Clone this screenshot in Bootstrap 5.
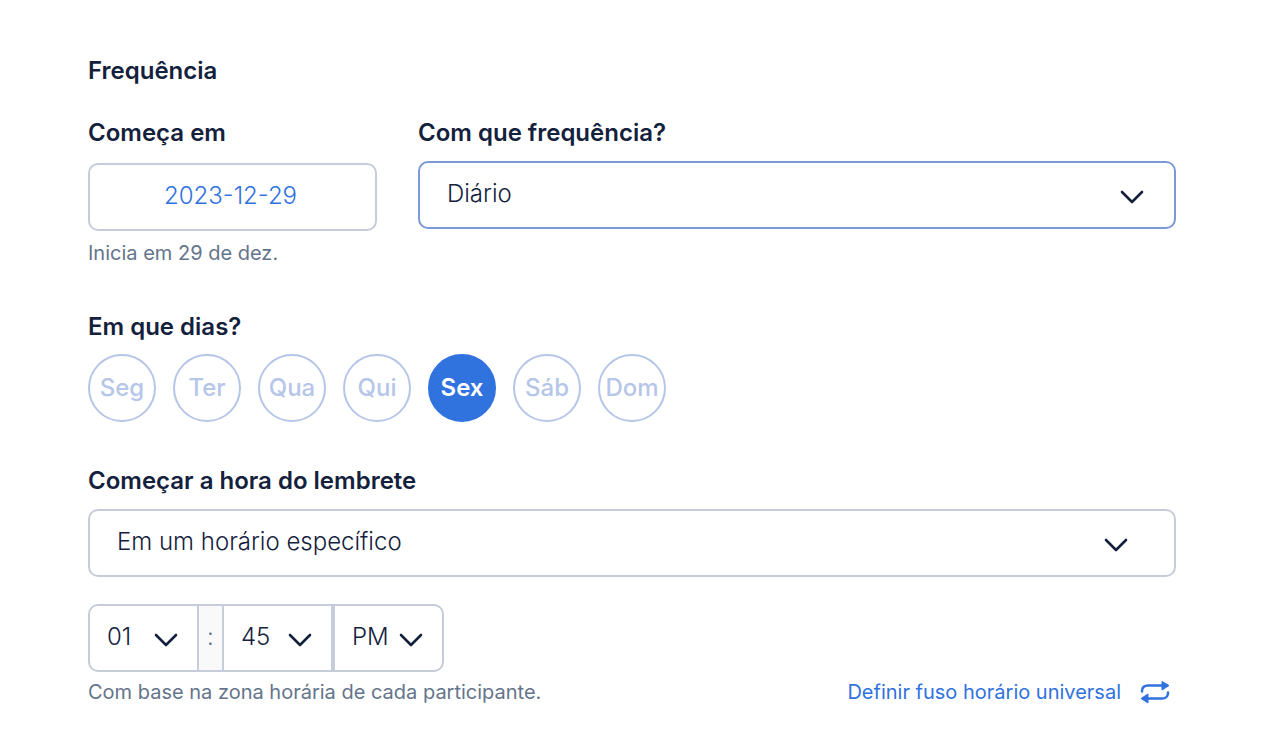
<!DOCTYPE html>
<html lang="pt">
<head>
<meta charset="utf-8">
<meta name="viewport" content="width=device-width, initial-scale=1">
<title>Frequência do lembrete</title>
<link href="https://cdn.jsdelivr.net/npm/bootstrap@5.3.0/dist/css/bootstrap.min.css" rel="stylesheet">
<style>
  :root { --ink: #14213d; --line: #c6ccd9; --brand: #3072de; --soft: #b6c6e8; --focus: #7c99d5; --muted: #64748b; }
  body { font-family: Inter, "Liberation Sans", sans-serif; font-size: 24px; line-height: 32px; color: var(--ink); background: #fff; }
  .reminder-form { padding: 55px 94px 40px 88px; }
  .section-title, .field-label { font-size: 24px; line-height: 32px; font-weight: 600; margin: 0; display: block; }
  .section-title { margin-bottom: 30px; }
  .field-row { --bs-gutter-x: 41px; }
  .date-col { flex: 0 0 auto; width: 330px; }
  .field { height: 68px; border: 2px solid var(--line); border-radius: 10px; font-size: 24px; font-weight: 350; line-height: 32px; color: var(--ink); padding: 15px 56px 17px 27px; }
  .form-select.field {
    margin-top: 12px;
    background-image: url("data:image/svg+xml,%3Csvg xmlns='http://www.w3.org/2000/svg' viewBox='0 0 24 14'%3E%3Cpath d='M2 2l10 10L22 2' fill='none' stroke='%2314213d' stroke-width='2.6' stroke-linecap='round' stroke-linejoin='round'/%3E%3C/svg%3E");
    background-size: 24px 14px; background-position: right 30px top 27px;
  }
  .form-select.field.is-current { border-color: var(--focus); }
  .form-select.field.wide { background-position: right 46px top 27px; }
  .date-field, .date-field:focus { color: var(--brand); text-align: center; padding: 14px 16px 18px 12px; margin-top: 14px; }
  .help { font-size: 20px; line-height: 28px; color: var(--muted); }
  .days-block { margin-top: 44px; }
  .days { gap: 17px; padding-top: 11px; }
  .time-block { margin-top: 43px; }
  .day { width: 68px; height: 68px; padding: 0; border: 2px solid var(--soft); border-radius: 50%; color: var(--soft); font-size: 24px; font-weight: 500; line-height: 32px; }
  .day.active, .day.active:hover { background: var(--brand); border-color: var(--brand); color: #fff; font-weight: 600; }
  .time-group { margin-top: 27px; }
  .input-group.time-group > .form-select.field { flex: 0 0 auto; width: 111px; padding: 15px 38px 17px 17px; background-position: right 19px top 27px; }
  .input-group.time-group > .colon { width: 23px; padding: 0 0 2px; justify-content: center; border: solid var(--line); border-width: 2px 0; background: #f9f9fa; color: var(--muted); font-size: 24px; font-weight: 350; }
  .zone-row { margin-top: 6px; }
  .zone-link { font-size: 20px; line-height: 28px; color: var(--brand); text-decoration: none; gap: 19px; padding-right: 6px; }
</style>
</head>
<body>
<form class="container-fluid reminder-form">
  <h1 class="section-title">Frequência</h1>

  <div class="row field-row">
    <div class="date-col">
      <label class="field-label" for="start">Começa em</label>
      <input class="form-control field date-field" id="start" type="text" value="2023-12-29">
      <div class="help mt-2">Inicia em 29 de dez.</div>
    </div>
    <div class="col">
      <label class="field-label" for="often">Com que frequência?</label>
      <select class="form-select field is-current" id="often"><option>Diário</option></select>
    </div>
  </div>

  <fieldset class="days-block">
    <legend class="field-label">Em que dias?</legend>
    <div class="days d-flex flex-wrap">
      <button type="button" class="btn day">Seg</button>
      <button type="button" class="btn day">Ter</button>
      <button type="button" class="btn day">Qua</button>
      <button type="button" class="btn day">Qui</button>
      <button type="button" class="btn day active" aria-pressed="true">Sex</button>
      <button type="button" class="btn day">Sáb</button>
      <button type="button" class="btn day">Dom</button>
    </div>
  </fieldset>

  <div class="time-block">
    <label class="field-label" for="when">Começar a hora do lembrete</label>
    <select class="form-select field wide" id="when"><option>Em um horário específico</option></select>
  </div>

  <div class="input-group time-group">
    <select class="form-select field m-0" aria-label="Hora"><option>01</option></select>
    <span class="input-group-text colon m-0">:</span>
    <select class="form-select field m-0" aria-label="Minuto"><option>45</option></select>
    <select class="form-select field m-0" aria-label="Período"><option>PM</option></select>
  </div>

  <div class="zone-row d-flex flex-wrap justify-content-between">
    <span class="help">Com base na zona horária de cada participante.</span>
    <a class="zone-link d-inline-flex align-items-center" href="#">Definir fuso horário universal
      <svg width="30" height="24" viewBox="0 0 30 24" fill="none" aria-hidden="true">
        <path d="M2 11.500V10.500Q2.500 5.500 8 5.500H23M28 12.500V13.500Q27.500 18.500 22 18.500H7" stroke="currentColor" stroke-width="2.500" stroke-linecap="round"/>
        <path d="M22 1.500L29 5.500L22 10ZM8 14L1 18.500L8 23Z" fill="currentColor" stroke="currentColor" stroke-width="1" stroke-linejoin="round"/>
      </svg>
    </a>
  </div>
</form>
<script src="https://cdn.jsdelivr.net/npm/bootstrap@5.3.0/dist/js/bootstrap.bundle.min.js"></script>
</body>
</html>
